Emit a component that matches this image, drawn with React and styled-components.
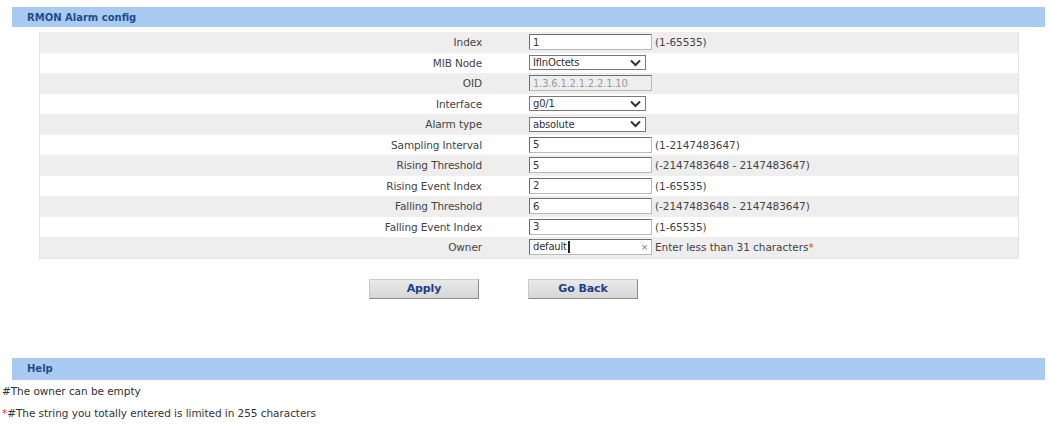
import React from "react";
import styled, { createGlobalStyle } from "styled-components";

const Global = createGlobalStyle`
  html, body { margin: 0; padding: 0; background: #fff; }
  body { font-family: "DejaVu Sans", Verdana, sans-serif; font-size: 10.5px; color: #333; }
`;

const Page = styled.div`
  padding-top: 7px;
  width: 1050px;
`;

const SectionBar = styled.div`
  margin: ${(p) => p.$margin || "0 5px 0 12px"};
  height: ${(p) => p.$h || 20}px;
  background: #a9cbf1;
  color: #1f4d8a;
  font-weight: bold;
  font-size: 10px;
  display: flex;
  align-items: center;
  padding-left: 15px;
`;

const FormTable = styled.div`
  margin: 5px 31px 0 39px;
  border: 1px solid #e2e2e2;
  border-top: none;
`;

const Row = styled.div`
  display: grid;
  grid-template-columns: 489px 1fr;
  height: 20.5px;
  align-items: center;
  background: ${(p) => (p.$alt ? "#eeeeee" : "#ffffff")};
`;

const Label = styled.div`
  text-align: right;
  padding-right: 47px;
  color: #444;
  letter-spacing: -0.1px;
  white-space: nowrap;
`;

const Value = styled.div`
  display: flex;
  align-items: center;
  gap: 3px;
  white-space: nowrap;
`;

const TextBox = styled.div`
  box-sizing: border-box;
  width: 123px;
  height: 16px;
  border: 1px solid #7a7a7a;
  border-color: #6d6d6d #b9b9b9 #b9b9b9 #6d6d6d;
  background: ${(p) => (p.$disabled ? "#eeeeee" : "#fff")};
  color: ${(p) => (p.$disabled ? "#9a9a9a" : "#333")};
  padding: 0 3px;
  display: flex;
  align-items: center;
  justify-content: space-between;
  font-size: 10px;
  letter-spacing: -0.2px;
`;

const SelectBox = styled.div`
  box-sizing: border-box;
  width: 117px;
  height: 15px;
  border: 1px solid #7a7a7a;
  background: #fff;
  color: #333;
  padding: 0 4px 0 3px;
  display: flex;
  align-items: center;
  justify-content: space-between;
  font-size: 10px;
  letter-spacing: -0.2px;
`;

const Hint = styled.span`
  color: #444;
  letter-spacing: -0.05px;
`;

const Req = styled.span`
  color: #e23b3b;
`;

const Clear = styled.span`
  color: #777;
  font-size: 9px;
`;

const Caret = styled.span`
  display: inline-block;
  width: 2px;
  height: 12px;
  background: #222;
  vertical-align: middle;
  margin-left: 1px;
`;

const ButtonRow = styled.div`
  margin: 20px 0 0 39px;
  display: grid;
  grid-template-columns: 489px 1fr;
`;

const Button = styled.button`
  box-sizing: border-box;
  width: 110px;
  height: 20px;
  justify-self: ${(p) => (p.$end ? "end" : "start")};
  margin-right: ${(p) => (p.$end ? "49px" : "0")};
  border: 1px solid #9c9c9c;
  border-color: #c8c8c8 #8a8a8a #8a8a8a #c8c8c8;
  background: linear-gradient(#e9e9e9, #d7d7d7);
  color: #213f86;
  font-family: "DejaVu Sans", Verdana, sans-serif;
  font-weight: bold;
  font-size: 11px;
  padding: 0;
  letter-spacing: -0.1px;
`;

const HelpText = styled.div`
  padding-left: 2px;
  height: 22px;
  line-height: 22px;
  color: #333;
  letter-spacing: -0.05px;
`;

const Chevron = () => (
  <svg width="11" height="8" viewBox="0 0 11 8">
    <path d="M1 1.5 L5.5 6 L10 1.5" fill="none" stroke="#333" strokeWidth="2" />
  </svg>
);

const rows = [
  { label: "Index", type: "text", value: "1", hint: "(1-65535)" },
  { label: "MIB Node", type: "select", value: "IfInOctets" },
  { label: "OID", type: "disabled", value: "1.3.6.1.2.1.2.2.1.10" },
  { label: "Interface", type: "select", value: "g0/1" },
  { label: "Alarm type", type: "select", value: "absolute" },
  { label: "Sampling Interval", type: "text", value: "5", hint: "(1-2147483647)" },
  { label: "Rising Threshold", type: "text", value: "5", hint: "(-2147483648 - 2147483647)" },
  { label: "Rising Event Index", type: "text", value: "2", hint: "(1-65535)" },
  { label: "Falling Threshold", type: "text", value: "6", hint: "(-2147483648 - 2147483647)" },
  { label: "Falling Event Index", type: "text", value: "3", hint: "(1-65535)" },
  { label: "Owner", type: "owner", value: "default" },
];

function Field({ row }) {
  if (row.type === "select") {
    return (
      <SelectBox>
        <span>{row.value}</span>
        <Chevron />
      </SelectBox>
    );
  }
  if (row.type === "disabled") {
    return <TextBox $disabled>{row.value}</TextBox>;
  }
  if (row.type === "owner") {
    return (
      <>
        <TextBox>
          <span>
            {row.value}
            <Caret />
          </span>
          <Clear>×</Clear>
        </TextBox>
        <Hint>
          Enter less than 31 characters<Req>*</Req>
        </Hint>
      </>
    );
  }
  return (
    <>
      <TextBox>{row.value}</TextBox>
      {row.hint && <Hint>{row.hint}</Hint>}
    </>
  );
}

export default function App() {
  return (
    <Page>
      <Global />
      <SectionBar>RMON Alarm config</SectionBar>
      <FormTable>
        {rows.map((r, i) => (
          <Row key={r.label} $alt={i % 2 === 0}>
            <Label>{r.label}</Label>
            <Value>
              <Field row={r} />
            </Value>
          </Row>
        ))}
      </FormTable>
      <ButtonRow>
        <Button $end>Apply</Button>
        <Button>Go Back</Button>
      </ButtonRow>
      <SectionBar $margin="59px 5px 0 12px" $h={22}>Help</SectionBar>
      <HelpText>#The owner can be empty</HelpText>
      <HelpText>
        <Req>*</Req>#The string you totally entered is limited in 255 characters
      </HelpText>
    </Page>
  );
}
